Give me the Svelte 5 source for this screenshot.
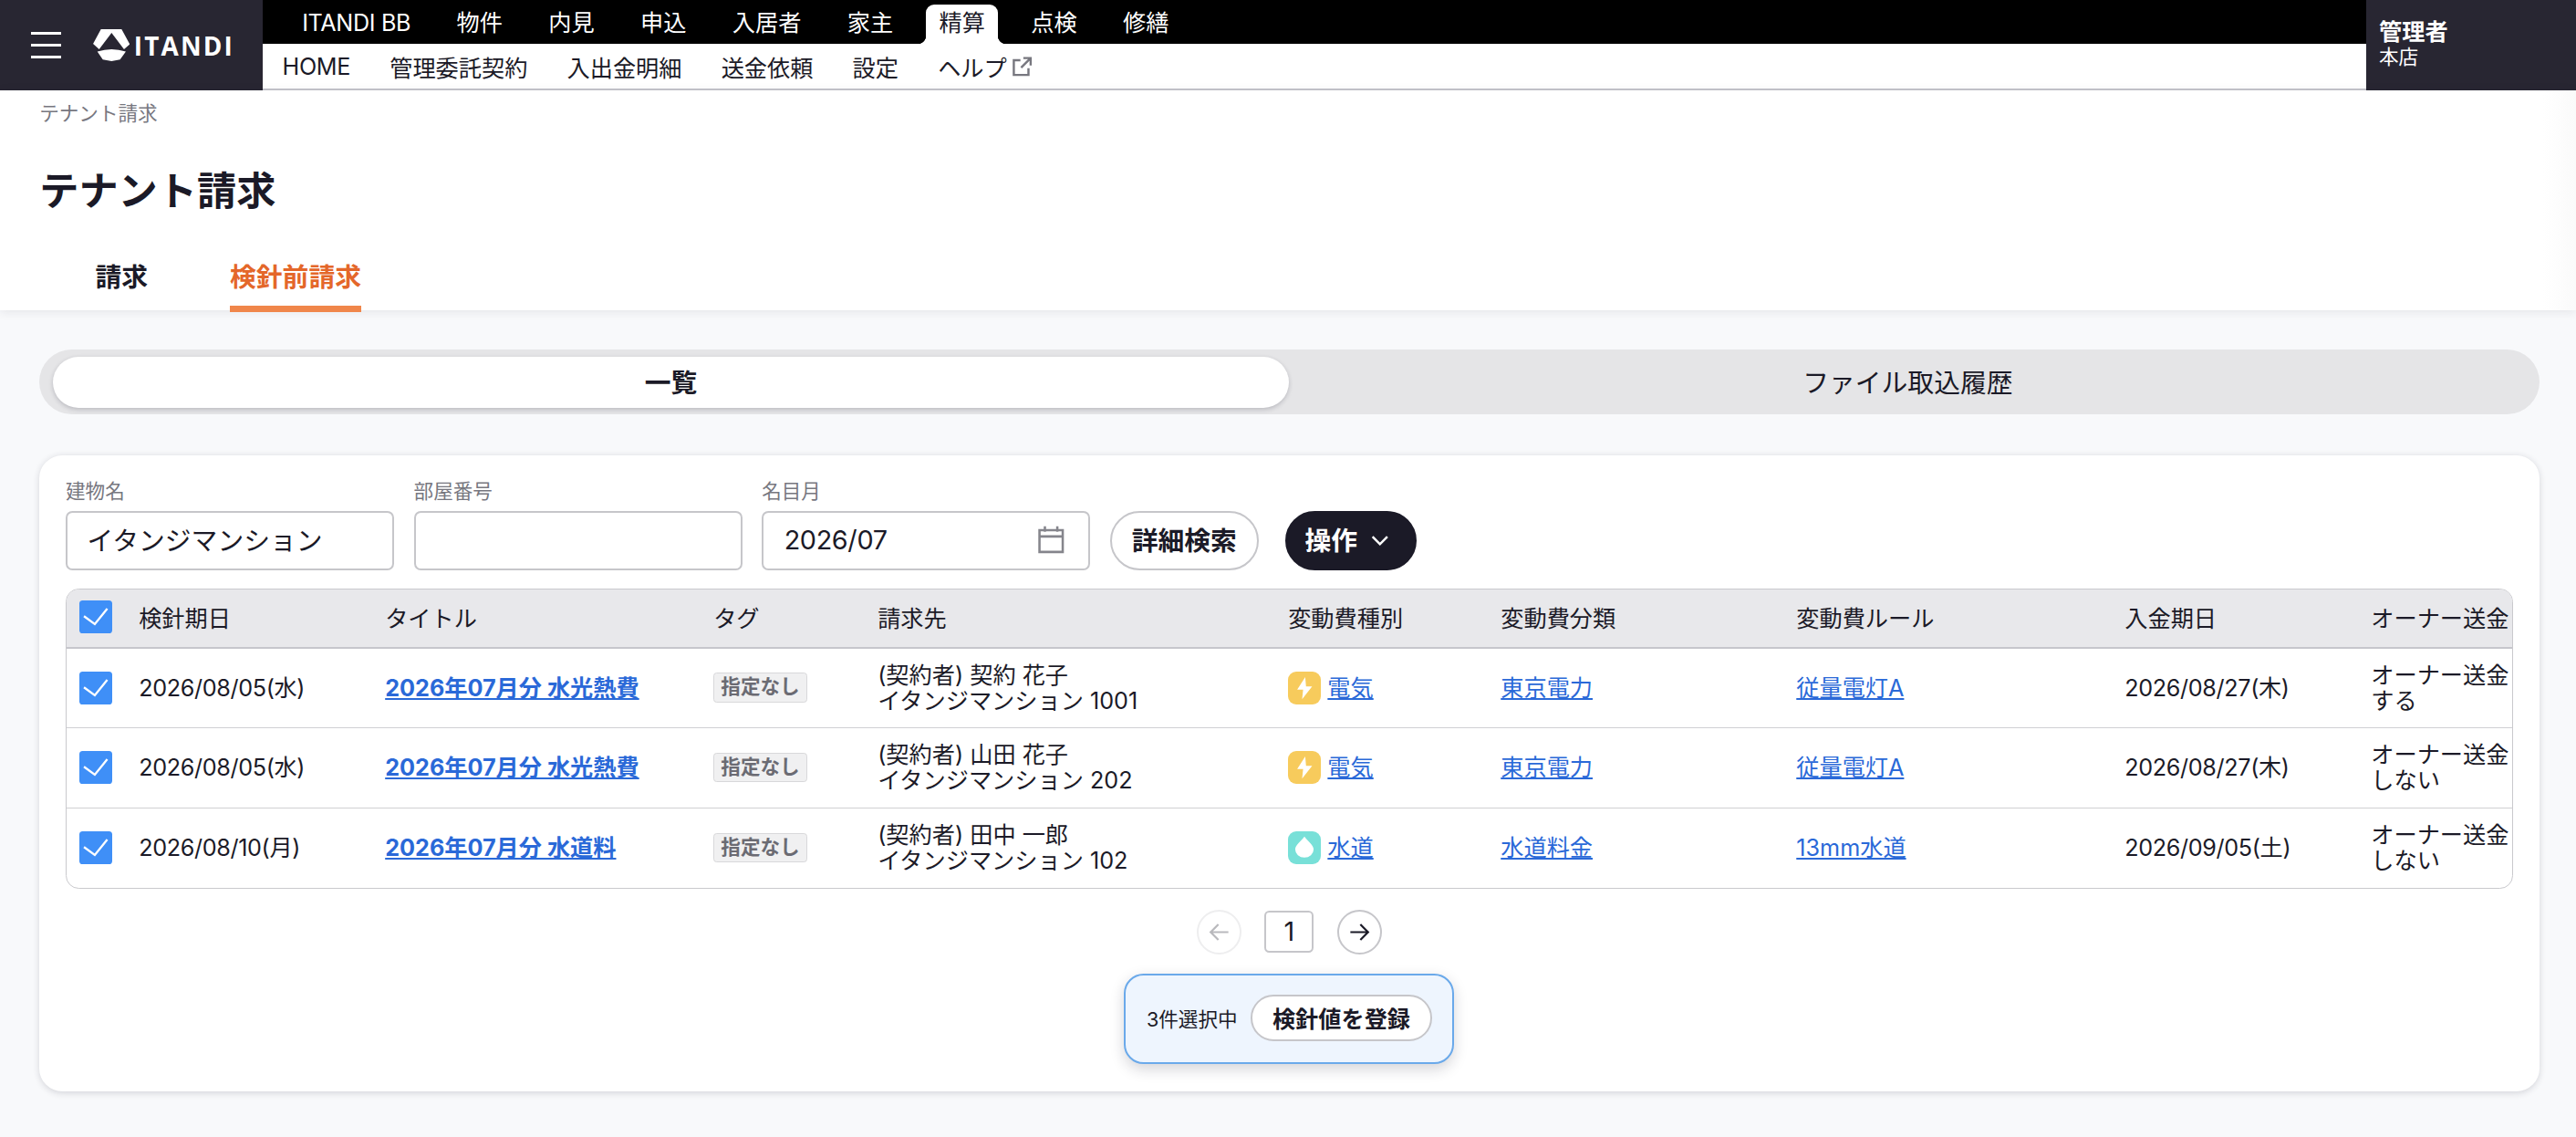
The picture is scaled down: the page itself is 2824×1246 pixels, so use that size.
<script>
  const topNav = ['ITANDI BB', '物件', '内見', '申込', '入居者', '家主', '精算', '点検', '修繕'];
  const subNav = ['HOME', '管理委託契約', '入出金明細', '送金依頼', '設定'];
  const columns = ['検針期日', 'タイトル', 'タグ', '請求先', '変動費種別', '変動費分類', '変動費ルール', '入金期日', 'オーナー送金'];

  const rows = [
    {
      date: '2026/08/05(水)',
      title: '2026年07月分 水光熱費',
      contract: '(契約者) 契約 花子',
      building: 'イタンジマンション 1001',
      kind: 'electric',
      kindLabel: '電気',
      category: '東京電力',
      rule: '従量電灯A',
      due: '2026/08/27(木)',
      owner: 'する'
    },
    {
      date: '2026/08/05(水)',
      title: '2026年07月分 水光熱費',
      contract: '(契約者) 山田 花子',
      building: 'イタンジマンション 202',
      kind: 'electric',
      kindLabel: '電気',
      category: '東京電力',
      rule: '従量電灯A',
      due: '2026/08/27(木)',
      owner: 'しない'
    },
    {
      date: '2026/08/10(月)',
      title: '2026年07月分 水道料',
      contract: '(契約者) 田中 一郎',
      building: 'イタンジマンション 102',
      kind: 'water',
      kindLabel: '水道',
      category: '水道料金',
      rule: '13mm水道',
      due: '2026/09/05(土)',
      owner: 'しない'
    }
  ];
</script>

<div class="app">
  <header class="head">
    <div class="brand">
      <button class="burger" aria-label="メニュー"><span></span><span></span><span></span></button>
      <svg class="logo-mark" viewBox="36 30 121 105" aria-hidden="true">
        <path fill="#fff" d="M62 30H130L157 80L138 96L97 42L56 96L36 78zM50 104Q97 88 144 104L125 130L97 135L68 130z"/>
      </svg>
      <span class="logo-text">ITANDI</span>
    </div>
    <div class="navs">
      <nav class="top-nav">
        {#each topNav as item}
          <a href="#top" class:active={item === '精算'} class:latin={item === 'ITANDI BB'}>{item}</a>
        {/each}
      </nav>
      <nav class="sub-nav">
        {#each subNav as item}
          <a href="#top" class:latin={item === 'HOME'}>{item}</a>
        {/each}
        <a href="#top" class="help">
          ヘルプ
          <svg viewBox="0 0 14 14" aria-hidden="true">
            <path d="M6 2.500H1.500v10h10V8M8 1h5v5M13 1 6.500 7.500" fill="none" stroke="#77777f" stroke-width="1.500"/>
          </svg>
        </a>
      </nav>
    </div>
    <div class="user">
      <strong>管理者</strong>
      <span>本店</span>
    </div>
  </header>

  <section class="title-area">
    <div class="crumb">テナント請求</div>
    <h1>テナント請求</h1>
    <div class="tabs">
      <a href="#top">請求</a>
      <a href="#top" class="on">検針前請求</a>
    </div>
  </section>

  <main class="page">
    <div class="segment">
      <div class="seg on">一覧</div>
      <div class="seg">ファイル取込履歴</div>
    </div>

    <section class="card">
      <div class="filters">
        <label class="field">
          <span>建物名</span>
          <input value="イタンジマンション" />
        </label>
        <label class="field">
          <span>部屋番号</span>
          <input value="" />
        </label>
        <label class="field">
          <span>名目月</span>
          <div class="date-box">
            <b>2026/07</b>
            <svg viewBox="0 0 18 18" aria-hidden="true">
              <path d="M1.500 3h15v14h-15zM1.500 7h15M5 0.500V4M13 0.500V4" fill="none" stroke="#85858c" stroke-width="1.500"/>
            </svg>
          </div>
        </label>
        <button class="btn">詳細検索</button>
        <button class="btn dark">
          操作
          <svg viewBox="0 0 12 12" aria-hidden="true">
            <path d="M1.500 4 6 8.500 10.500 4" fill="none" stroke="#fff" stroke-width="1.400"/>
          </svg>
        </button>
      </div>

      <div class="table-wrap">
        <table>
          <colgroup>
            <col style="width:44px" />
            <col style="width:150px" />
            <col style="width:200px" />
            <col style="width:100px" />
            <col style="width:250px" />
            <col style="width:129.500px" />
            <col style="width:180px" />
            <col style="width:200px" />
            <col style="width:150px" />
            <col />
          </colgroup>
          <thead>
            <tr>
              <th class="check-cell">
                <span class="check">
                  <svg viewBox="0 0 20 20"><path d="M2.800 9.600 9.400 14.400 17 5" fill="none" stroke="#fff" stroke-width="1.300"/></svg>
                </span>
              </th>
              {#each columns as col}
                <th>{col}</th>
              {/each}
            </tr>
          </thead>
          <tbody>
            {#each rows as row}
              <tr>
                <td class="check-cell">
                  <span class="check">
                    <svg viewBox="0 0 20 20"><path d="M2.800 9.600 9.400 14.400 17 5" fill="none" stroke="#fff" stroke-width="1.300"/></svg>
                  </span>
                </td>
                <td class="date">{row.date}</td>
                <td><a class="title-link" href="#top">{row.title}</a></td>
                <td><span class="tag">指定なし</span></td>
                <td>{row.contract}<br />{row.building}</td>
                <td>
                  <div class="kind">
                    <span class="kind-icon {row.kind}">
                      {#if row.kind === 'electric'}
                        <svg viewBox="0 0 20 20"><path fill="#fff" d="M10.500 3.300 5.600 11H9.200L8.600 16.800 14.700 9H11z"/></svg>
                      {:else}
                        <svg viewBox="0 0 20 20"><path fill="#fff" d="M10 3.200C11.800 5.900 15.600 8.200 15.600 11A5.600 5 0 0 1 4.400 11C4.400 8.200 8.200 5.900 10 3.200z"/></svg>
                      {/if}
                    </span>
                    <a href="#top">{row.kindLabel}</a>
                  </div>
                </td>
                <td><a href="#top">{row.category}</a></td>
                <td><a href="#top">{row.rule}</a></td>
                <td class="date">{row.due}</td>
                <td>オーナー送金<br />{row.owner}</td>
              </tr>
            {/each}
          </tbody>
        </table>
      </div>

      <div class="pager">
        <button class="round off" aria-label="前へ">
          <svg viewBox="0 0 16 16"><path d="M14 8H2.500M7.500 3 2.500 8l5 5" fill="none" stroke="#b9b9bd" stroke-width="1.300"/></svg>
        </button>
        <span class="page-no">1</span>
        <button class="round" aria-label="次へ">
          <svg viewBox="0 0 16 16"><path d="M2 8h11.500M8.500 3l5 5-5 5" fill="none" stroke="#1b1a27" stroke-width="1.300"/></svg>
        </button>
      </div>

      <div class="selection">
        <span>3件選択中</span>
        <button class="btn small">検針値を登録</button>
      </div>
    </section>
  </main>
</div>

<style>
  :global(body) {
    margin: 0;
    background: #f8f9fb;
  }

  /* the capture is a 1569px wide layout at 1.8x */
  .app {
    zoom: 1.8;
    width: 1568.89px;
    min-height: 692.2px;
    background: #f8f9fb;
    color: #1b1a27;
    font-family: Inter, "Noto Sans CJK JP", sans-serif;
    font-size: 14px;
    overflow: hidden;
  }

  a {
    color: inherit;
    text-decoration: none;
  }

  button {
    font-family: inherit;
    cursor: pointer;
  }

  .latin {
    letter-spacing: -0.2px;
  }

  .head {
    display: flex;
    height: 55px;
    background: #fff;
  }

  .brand {
    display: flex;
    align-items: center;
    width: 160px;
    background: #282632;
    flex-shrink: 0;
  }

  .burger {
    display: flex;
    flex-direction: column;
    gap: 5.5px;
    width: 18px;
    margin-left: 19px;
    padding: 0;
    background: none;
    border: 0;
  }

  .burger span {
    display: block;
    height: 1.7px;
    background: #fff;
  }

  .logo-mark {
    width: 22.4px;
    height: 19.4px;
    margin-left: 19.7px;
  }

  .logo-text {
    margin-left: 2.5px;
    color: #fff;
    font-family: "Open Sans", sans-serif;
    font-size: 15.5px;
    font-weight: 700;
    letter-spacing: 1.2px;
  }

  .navs {
    flex: 1;
    display: flex;
    flex-direction: column;
  }

  .top-nav {
    display: flex;
    gap: 12px;
    height: 26.7px;
    padding-left: 16px;
    background: #000;
    box-sizing: border-box;
  }

  .top-nav a {
    height: 23.7px;
    margin-top: 3px;
    padding: 0 8px;
    color: #fff;
    line-height: 23px;
    position: relative;
  }

  .top-nav a.active {
    background: #fff;
    color: #1b1a27;
    border-radius: 5px 5px 0 0;
  }

  .top-nav a.active::before,
  .top-nav a.active::after {
    content: "";
    position: absolute;
    bottom: 0;
    width: 5px;
    height: 5px;
  }

  .top-nav a.active::before {
    left: -5px;
    background: radial-gradient(circle at 0 0, #000 5px, #fff 5.3px);
  }

  .top-nav a.active::after {
    right: -5px;
    background: radial-gradient(circle at 100% 0, #000 5px, #fff 5.3px);
  }

  .sub-nav {
    display: flex;
    align-items: center;
    gap: 24px;
    flex: 1;
    padding-left: 12px;
    border-bottom: 1.2px solid #c6c6cc;
  }

  .help {
    display: flex;
    align-items: center;
    gap: 3px;
  }

  .help svg {
    width: 12.5px;
    height: 12.5px;
    margin-top: 1px;
  }

  .user {
    display: flex;
    flex-direction: column;
    justify-content: center;
    width: 128px;
    padding: 0 0 2px 8px;
    box-sizing: border-box;
    background: #282632;
    color: #fff;
    flex-shrink: 0;
  }

  .user strong {
    font-size: 14px;
    line-height: 16px;
  }

  .user span {
    font-size: 12px;
    line-height: 14px;
  }

  .title-area {
    height: 134px;
    padding: 6px 24px 0;
    box-sizing: border-box;
    background: #fff;
    box-shadow: 0 1px 6px rgba(30, 30, 50, 0.1);
    position: relative;
  }

  .title-area::after {
    content: "";
    position: absolute;
    top: 0;
    right: 0;
    bottom: 0;
    width: 20px;
    background: linear-gradient(to right, #fff, #fafafa);
  }

  .crumb {
    color: #77777f;
    font-size: 12px;
    line-height: 16px;
  }

  h1 {
    margin: 23.7px 0 0;
    font-size: 24px;
    line-height: 32px;
    font-weight: 700;
  }

  .tabs {
    display: flex;
    gap: 50px;
    margin-top: 16.3px;
    padding-left: 34px;
  }

  .tabs a {
    height: 40.9px;
    box-sizing: border-box;
    padding-top: 9px;
    font-size: 16px;
    line-height: 22px;
    font-weight: 700;
  }

  .tabs a.on {
    color: #e4672a;
    border-bottom: 4.4px solid #f0864a;
  }

  .page {
    padding: 24px 22.4px 0 24px;
  }

  .segment {
    display: flex;
    height: 39.5px;
    padding: 4px 8px;
    box-sizing: border-box;
    background: #e5e5e7;
    border-radius: 20px;
  }

  .seg {
    flex: 1;
    display: flex;
    align-items: center;
    justify-content: center;
    padding-bottom: 1.5px;
    box-sizing: border-box;
    font-size: 16px;
    border-radius: 16px;
  }

  .seg.on {
    background: #fff;
    font-weight: 700;
    box-shadow: 0 1px 3px rgba(30, 30, 50, 0.22);
  }

  .card {
    margin-top: 24.5px;
    padding: 14px 16px 16.4px;
    background: #fff;
    border-radius: 14px;
    box-shadow: 0 1px 4px rgba(30, 30, 50, 0.16);
  }

  .filters {
    display: flex;
    align-items: flex-end;
    gap: 12px;
  }

  .field {
    display: flex;
    flex-direction: column;
    gap: 4px;
    width: 200px;
  }

  .field span {
    color: #77777f;
    font-size: 12px;
    line-height: 16px;
  }

  .field input,
  .date-box {
    height: 36px;
    width: 100%;
    padding: 0 12px 2px;
    box-sizing: border-box;
    background: #fff;
    border: 1.2px solid #c6c6ca;
    border-radius: 4px;
    color: inherit;
    font-family: inherit;
    font-size: 16px;
  }

  .date-box {
    display: flex;
    align-items: center;
    justify-content: space-between;
    padding-bottom: 1px;
  }

  .date-box b {
    font-weight: 400;
    letter-spacing: -0.2px;
    padding-left: 0.5px;
  }

  .date-box svg {
    width: 17px;
    height: 17px;
    margin-right: 2px;
  }

  .btn {
    height: 36px;
    padding: 0 12.2px 2px;
    background: #fff;
    border: 1.2px solid #c6c6ca;
    border-radius: 18px;
    color: #1b1a27;
    font-size: 16px;
    font-weight: 700;
    white-space: nowrap;
  }

  .btn.dark {
    display: flex;
    align-items: center;
    gap: 8px;
    margin-left: 4px;
    padding: 0 15px 2px 11px;
    background: #1b1a27;
    border-color: #1b1a27;
    color: #fff;
  }

  .btn.dark svg {
    width: 12px;
    height: 12px;
    margin-top: 2px;
  }

  .btn.small {
    height: 28px;
    padding-bottom: 1px;
    font-size: 14px;
    border-radius: 14px;
  }

  .table-wrap {
    margin-top: 11.6px;
    border: 0.6px solid #c9c9cd;
    border-radius: 8px;
    overflow: hidden;
  }

  table {
    width: 100%;
    table-layout: fixed;
    border-collapse: separate;
    border-spacing: 0;
  }

  th {
    height: 35.8px;
    padding: 0 0 1.5px;
    background: #e8e8eb;
    border-bottom: 1.2px solid #c6c6cc;
    font-weight: 400;
    text-align: left;
    white-space: nowrap;
    box-sizing: border-box;
  }

  td {
    height: 48.6px;
    padding: 0 0 0.5px;
    border-bottom: 0.6px solid #d0d0d3;
    line-height: 15.6px;
    box-sizing: border-box;
  }

  td.date {
    letter-spacing: -0.2px;
  }

  tbody tr:last-child td {
    border-bottom: 0;
  }

  td a {
    color: #2a69d8;
    text-decoration: underline;
  }

  td a.title-link {
    font-weight: 700;
  }

  .check-cell {
    padding-left: 8px;
  }

  .check {
    display: block;
    width: 20px;
    height: 20px;
    background: #3f8ff7;
    border-radius: 2px;
  }

  .check svg {
    display: block;
    width: 20px;
    height: 20px;
  }

  .tag {
    display: inline-block;
    height: 18px;
    padding: 0 4px;
    box-sizing: border-box;
    background: #f0f0f1;
    border: 0.6px solid #d8d8da;
    border-radius: 2px;
    color: #6b6b73;
    font-size: 12px;
    font-weight: 700;
    line-height: 16px;
    vertical-align: middle;
  }

  .kind {
    display: flex;
    align-items: center;
    gap: 4px;
  }

  .kind-icon {
    display: block;
    width: 20px;
    height: 20px;
    border-radius: 5px;
  }

  .kind-icon svg {
    display: block;
    width: 20px;
    height: 20px;
  }

  .kind-icon.electric {
    background: #f7cb5c;
  }

  .kind-icon.water {
    background: #78e0d8;
  }

  .pager {
    display: flex;
    justify-content: center;
    align-items: center;
    gap: 14px;
    margin-top: 12.4px;
  }

  .round {
    display: flex;
    align-items: center;
    justify-content: center;
    width: 27.3px;
    height: 27.3px;
    padding: 0;
    background: #fff;
    border: 1.2px solid #c6c6ca;
    border-radius: 50%;
  }

  .round.off {
    border-color: #eeeeef;
  }

  .round svg {
    width: 15px;
    height: 15px;
  }

  .page-no {
    width: 30px;
    height: 25.5px;
    box-sizing: border-box;
    border: 1.2px solid #c6c6ca;
    border-radius: 3px;
    font-size: 16px;
    line-height: 23px;
    text-align: center;
  }

  .selection {
    display: flex;
    align-items: center;
    gap: 8px;
    width: fit-content;
    height: 55.4px;
    margin: 11.6px auto 0;
    padding: 0 12.5px 1px;
    box-sizing: border-box;
    background: #eef5fe;
    border: 1.2px solid #6aa9ea;
    border-radius: 12px;
    box-shadow: 0 3px 8px rgba(30, 30, 50, 0.18);
    font-size: 12px;
  }
</style>
